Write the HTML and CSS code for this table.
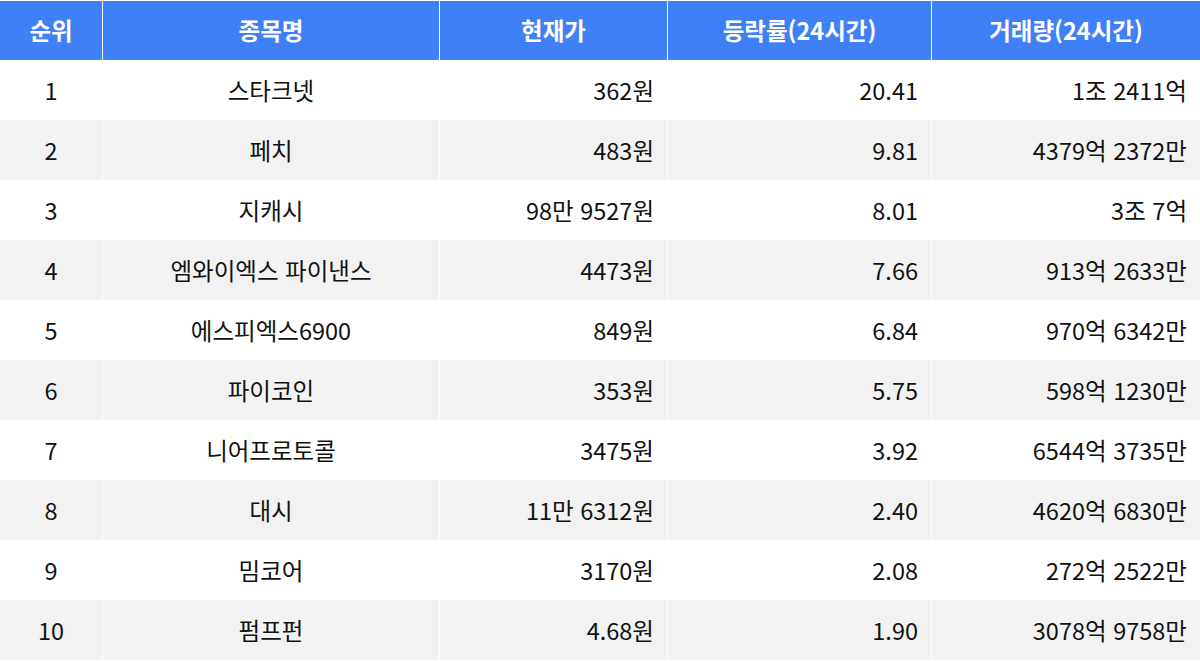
FILE: index.html
```html
<!DOCTYPE html>
<html lang="ko">
<head>
<meta charset="utf-8">
<link rel="stylesheet" href="styles.css">
</head>
<body>
<div class="wrap">
<table class="rank">
<colgroup>
<col class="c1"><col class="c2"><col class="c3"><col class="c4"><col class="c5">
</colgroup>
<thead>
<tr><th>순위</th><th>종목명</th><th>현재가</th><th>등락률(24시간)</th><th>거래량(24시간)</th></tr>
</thead>
<tbody>
<tr><td class="ctr">1</td><td class="ctr">스타크넷</td><td class="num">362원</td><td class="num">20.41</td><td class="num">1조 2411억</td></tr>
<tr><td class="ctr">2</td><td class="ctr">페치</td><td class="num">483원</td><td class="num">9.81</td><td class="num">4379억 2372만</td></tr>
<tr><td class="ctr">3</td><td class="ctr">지캐시</td><td class="num">98만 9527원</td><td class="num">8.01</td><td class="num">3조 7억</td></tr>
<tr><td class="ctr">4</td><td class="ctr">엠와이엑스 파이낸스</td><td class="num">4473원</td><td class="num">7.66</td><td class="num">913억 2633만</td></tr>
<tr><td class="ctr">5</td><td class="ctr">에스피엑스6900</td><td class="num">849원</td><td class="num">6.84</td><td class="num">970억 6342만</td></tr>
<tr><td class="ctr">6</td><td class="ctr">파이코인</td><td class="num">353원</td><td class="num">5.75</td><td class="num">598억 1230만</td></tr>
<tr><td class="ctr">7</td><td class="ctr">니어프로토콜</td><td class="num">3475원</td><td class="num">3.92</td><td class="num">6544억 3735만</td></tr>
<tr><td class="ctr">8</td><td class="ctr">대시</td><td class="num">11만 6312원</td><td class="num">2.40</td><td class="num">4620억 6830만</td></tr>
<tr><td class="ctr">9</td><td class="ctr">밈코어</td><td class="num">3170원</td><td class="num">2.08</td><td class="num">272억 2522만</td></tr>
<tr><td class="ctr">10</td><td class="ctr">펌프펀</td><td class="num">4.68원</td><td class="num">1.90</td><td class="num">3078억 9758만</td></tr>
</tbody>
</table>
</div>
</body>
</html>
```
FILE: styles.css
```css
html, body {
  margin: 0;
  padding: 0;
  background: #ffffff;
}
.wrap {
  padding-top: 1px;
  width: 1200px;
}
.rank {
  width: 1200px;
  table-layout: fixed;
  border-collapse: separate;
  border-spacing: 0;
  font-family: "Noto Sans CJK KR", "Noto Sans", sans-serif;
  font-size: 23.5px;
  color: #111111;
}
.c1 { width: 102px; }
.c2 { width: 337px; }
.c3 { width: 228px; }
.c4 { width: 264px; }
.c5 { width: 269px; }
.rank th {
  background: #4080f6;
  color: #ffffff;
  font-size: 23.5px;
  font-weight: 700;
  height: 59px;
  padding: 0;
  text-align: center;
  vertical-align: middle;
  border-left: 1px solid #ffffff;
  box-sizing: border-box;
  line-height: 1;
}
.rank th:first-child,
.rank td:first-child {
  border-left: none;
}
.rank td {
  height: 60px;
  padding: 2px 13px 0 13px;
  vertical-align: middle;
  border-left: 1px solid #ffffff;
  box-sizing: border-box;
  line-height: 1;
}
.rank tbody tr:nth-child(even) td {
  background: #f2f2f2;
}
.ctr { text-align: center; }
.num { text-align: right; }
```
